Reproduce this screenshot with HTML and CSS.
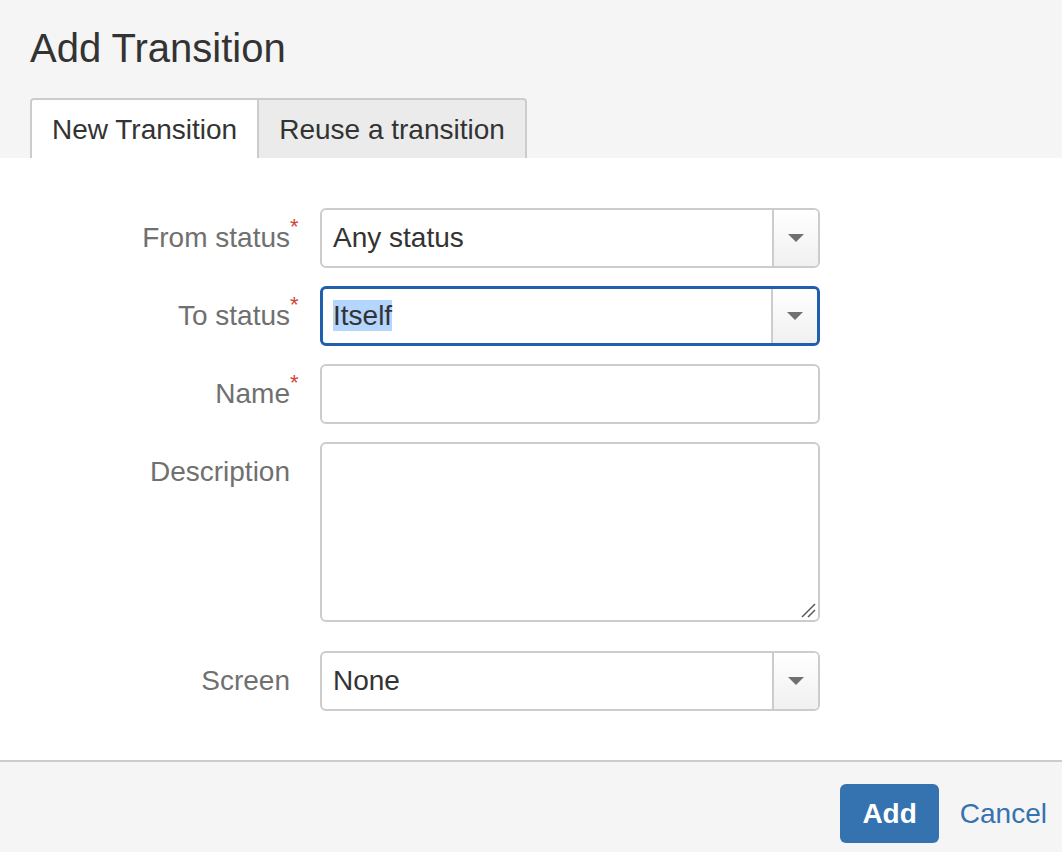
FILE: index.html
```html
<!DOCTYPE html>
<html lang="en">
<head>
    <meta charset="UTF-8">
    <meta name="viewport" content="width=device-width, initial-scale=1.0">
    <title>Add Transition</title>
    <link rel="stylesheet" href="styles.css">
</head>
<body>
    <div class="dialog">
        <header class="dialog-header">
            <h2 class="dialog-title">Add Transition</h2>
            <ul class="tabs">
                <li class="tab active">New Transition</li>
                <li class="tab">Reuse a transition</li>
            </ul>
        </header>

        <form class="dialog-body">
            <div class="field">
                <label class="field-label">From status<span class="req">*</span></label>
                <div class="control select">
                    <span class="select-value">Any status</span>
                    <span class="select-arrow"></span>
                </div>
            </div>
            <div class="field">
                <label class="field-label">To status<span class="req">*</span></label>
                <div class="control select focused">
                    <span class="select-value"><span class="selected-text">Itself</span></span>
                    <span class="select-arrow"></span>
                </div>
            </div>
            <div class="field">
                <label class="field-label">Name<span class="req">*</span></label>
                <div class="control text-input"></div>
            </div>
            <div class="field field-textarea">
                <label class="field-label">Description</label>
                <div class="control textarea">
                    <svg class="resize-grip" width="16" height="16" viewBox="0 0 16 16">
                        <line x1="2" y1="15" x2="15" y2="2" stroke="#555" stroke-width="1.5"/>
                        <line x1="8" y1="15" x2="15" y2="8" stroke="#555" stroke-width="1.5"/>
                    </svg>
                </div>
            </div>
            <div class="field">
                <label class="field-label">Screen</label>
                <div class="control select">
                    <span class="select-value">None</span>
                    <span class="select-arrow"></span>
                </div>
            </div>
        </form>

        <footer class="dialog-footer">
            <button type="button" class="btn-primary">Add</button>
            <a href="#" class="link-cancel">Cancel</a>
        </footer>
    </div>
</body>
</html>
```

FILE: styles.css
```css
* {
    margin: 0;
    padding: 0;
    box-sizing: border-box;
}

body {
    font-family: "Liberation Sans", Arial, sans-serif;
    color: #333;
    background: #fff;
}

.dialog-header {
    background: #f5f5f5;
    padding: 24px 0 0 30px;
}

.dialog-title {
    font-size: 40px;
    line-height: 48px;
    font-weight: normal;
    color: #333;
    margin-bottom: 26px;
}

.tabs {
    display: flex;
    list-style: none;
}

.tab {
    font-size: 28px;
    line-height: 32px;
    padding: 14px 20px 12px;
    background: #ebebeb;
    border: 2px solid #ccc;
    border-bottom: none;
    border-left: none;
    border-top-right-radius: 4px;
}

.tab.active {
    background: #fff;
    border-left: 2px solid #ccc;
    border-radius: 4px 0 0 0;
}

.dialog-body {
    padding: 50px 0 49px;
}

.field {
    display: flex;
    align-items: flex-start;
    margin-bottom: 18px;
}

.field:last-child {
    margin-bottom: 0;
}

.field-textarea {
    margin-bottom: 29px;
}

.field-label {
    position: relative;
    width: 290px;
    margin-right: 30px;
    text-align: right;
    font-size: 28px;
    line-height: 60px;
    color: #707070;
}

.req {
    position: absolute;
    left: 100%;
    top: 7px;
    font-size: 22px;
    line-height: 24px;
    color: #d04437;
}

.control {
    width: 500px;
    height: 60px;
    border: 2px solid #ccc;
    border-radius: 6px;
    background: #fff;
}

.select {
    display: flex;
}

.select-value {
    flex: 1;
    padding-left: 11px;
    font-size: 28px;
    line-height: 56px;
    color: #333;
}

.select-arrow {
    width: 46px;
    border-left: 2px solid #ccc;
    border-radius: 0 4px 4px 0;
    background: linear-gradient(#fff, #f0f0f0);
    display: flex;
    align-items: center;
    justify-content: center;
}

.select-arrow::after {
    content: "";
    border-left: 8px solid transparent;
    border-right: 8px solid transparent;
    border-top: 8px solid #707070;
}

.select.focused {
    border: 3px solid #1f5fae;
}

.select.focused .select-value {
    padding-left: 10px;
    line-height: 54px;
}

.selected-text {
    background: #b4d5fd;
}

.textarea {
    position: relative;
    height: 180px;
}

.resize-grip {
    position: absolute;
    right: 2px;
    bottom: 2px;
}

.dialog-footer {
    display: flex;
    justify-content: flex-end;
    align-items: center;
    gap: 21px;
    padding: 22px 15px;
    background: #f5f5f5;
    border-top: 2px solid #ccc;
}

.btn-primary {
    height: 59px;
    padding: 0 22px;
    border: none;
    border-radius: 6px;
    background: #3572b0;
    color: #fff;
    font-family: inherit;
    font-size: 28px;
    font-weight: bold;
    cursor: pointer;
}

.link-cancel {
    font-size: 28px;
    color: #3572b0;
    text-decoration: none;
}
```
